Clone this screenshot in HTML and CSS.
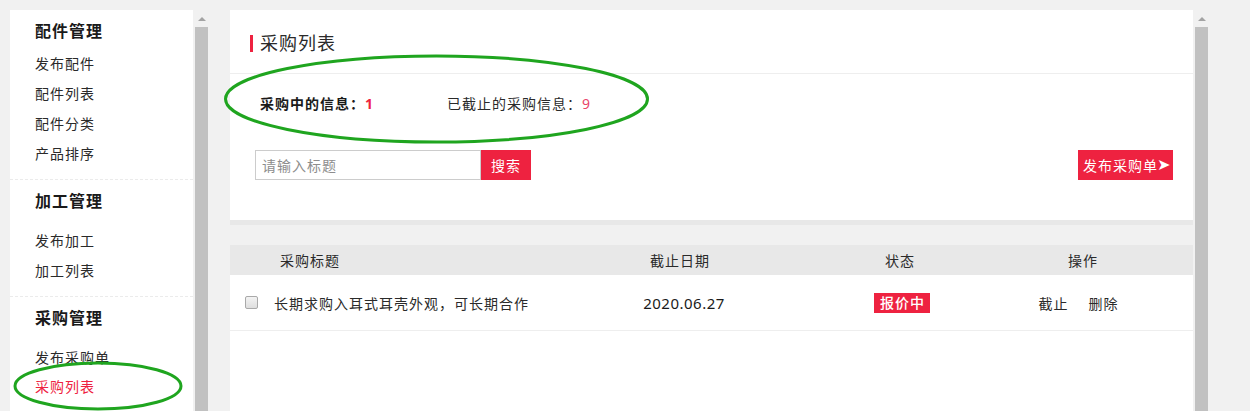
FILE: index.html
```html
<!DOCTYPE html>
<html lang="zh-CN">
<head>
<meta charset="utf-8">
<title>采购列表</title>
<link rel="stylesheet" href="styles.css">
</head>
<body>
<div class="page">
  <div class="frame side-frame">
    <nav class="sidebar">
      <div class="menu-group menu-group--first">
        <h3 class="menu-title">配件管理</h3>
        <ul class="menu-list">
          <li class="menu-item">发布配件</li>
          <li class="menu-item">配件列表</li>
          <li class="menu-item">配件分类</li>
          <li class="menu-item">产品排序</li>
        </ul>
      </div>
      <div class="menu-group">
        <h3 class="menu-title">加工管理</h3>
        <ul class="menu-list">
          <li class="menu-item">发布加工</li>
          <li class="menu-item">加工列表</li>
        </ul>
      </div>
      <div class="menu-group menu-group--last">
        <h3 class="menu-title">采购管理</h3>
        <ul class="menu-list">
          <li class="menu-item">发布采购单</li>
          <li class="menu-item menu-item--active">采购列表</li>
        </ul>
      </div>
    </nav>
    <div class="scrollbar"><div class="sb-arrow"><span class="sb-tri"></span></div><div class="sb-thumb"></div></div>
  </div>

  <div class="frame main-frame">
    <main class="content">
      <section class="panel">
        <div class="panel-head"><h2 class="panel-title">采购列表</h2></div>
        <div class="stats">
          <div class="stat stat--active"><span class="stat-label">采购中的信息：</span><span class="stat-num">1</span></div>
          <div class="stat stat--closed"><span class="stat-label">已截止的采购信息：</span><span class="stat-num">9</span></div>
        </div>
        <div class="toolbar">
          <div class="search">
            <input class="search-input" type="text" placeholder="请输入标题">
            <button class="btn search-btn">搜索</button>
          </div>
          <button class="btn publish-btn">发布采购单<span class="arrow">➤</span></button>
        </div>
      </section>

      <section class="list">
        <div class="list-row list-head">
          <div class="cell cell-title">采购标题</div>
          <div class="cell cell-center">截止日期</div>
          <div class="cell cell-center">状态</div>
          <div class="cell cell-center cell-ops">操作</div>
        </div>
        <div class="list-row list-item">
          <div class="cell cell-check"><input class="check" type="checkbox"><span class="item-title">长期求购入耳式耳壳外观，可长期合作</span></div>
          <div class="cell cell-center cell-date">2020.06.27</div>
          <div class="cell cell-center"><span class="badge">报价中</span></div>
          <div class="cell cell-center cell-ops cell-ops--body"><a class="op">截止</a><a class="op">删除</a></div>
        </div>
      </section>
    </main>
    <div class="scrollbar"><div class="sb-arrow"><span class="sb-tri"></span></div><div class="sb-thumb"></div></div>
  </div>
</div>

<svg class="annotations" width="1250" height="411" viewBox="0 0 1250 411">
  <ellipse cx="436.5" cy="99" rx="211" ry="43" fill="none" stroke="#1fa51f" stroke-width="3"/>
  <ellipse cx="98" cy="386" rx="83" ry="23" fill="none" stroke="#1fa51f" stroke-width="3"/>
</svg>
</body>
</html>
```

FILE: styles.css
```css
* { box-sizing: border-box; }

html, body {
  margin: 0;
  padding: 0;
  height: 411px;
  overflow: hidden;
}

body {
  background: #f1f1f1;
  font-family: "Noto Sans", "Noto Sans CJK SC", sans-serif;
  font-size: 14px;
  letter-spacing: 1px;
  color: #333;
  position: relative;
}

.page {
  display: flex;
  height: 411px;
  padding-top: 10px;
}

.frame {
  display: flex;
  gap: 2px;
}

.side-frame { margin-left: 10px; }
.main-frame { margin-left: 22px; }

/* scrollbars */
.scrollbar {
  width: 13px;
  display: flex;
  flex-direction: column;
}
.sb-arrow {
  height: 17px;
  display: flex;
  justify-content: center;
  align-items: center;
}
.sb-tri {
  width: 0;
  height: 0;
  border-left: 4px solid transparent;
  border-right: 4px solid transparent;
  border-bottom: 4px solid #a3a3a3;
}
.sb-thumb {
  flex: 1;
  background: #c1c1c1;
}

/* sidebar */
.sidebar {
  width: 183px;
  background: #fff;
}
.menu-group {
  padding: 6px 0 10px 25px;
  border-bottom: 1px dashed #ebebeb;
}
.menu-group--last { border-bottom: none; }
.menu-title {
  margin: 0;
  font-size: 16px;
  line-height: 30px;
  font-weight: bold;
  color: #1a1a1a;
}
.menu-list {
  list-style: none;
  margin: 10px 0 0;
  padding: 0;
}
.menu-group--first .menu-list { margin-top: 3px; }
.menu-item {
  line-height: 30px;
  color: #2a2a2a;
}
.menu-group--last .menu-item { line-height: 29px; }
.menu-item--active { color: #ee2240; }

/* main */
.content {
  width: 963px;
  display: flex;
  flex-direction: column;
  gap: 20px;
}

.panel {
  background: #fff;
  border-bottom: 5px solid #e8e8e8;
  padding-bottom: 40px;
}
.panel-head {
  padding: 18px 20px 15px;
  border-bottom: 1px solid #eeeeee;
}
.panel-title {
  margin: 0;
  font-size: 18px;
  font-weight: normal;
  line-height: 30px;
  color: #2a2a2a;
  display: flex;
  align-items: center;
  gap: 7px;
}
.panel-title::before {
  content: "";
  width: 3px;
  height: 17px;
  background: #ee2240;
}

.stats {
  display: flex;
  margin-top: 15px;
  padding-left: 30px;
  line-height: 30px;
  font-size: 14px;
}
.stat--active { width: 187px; }
.stat--active .stat-label { font-weight: bold; color: #1a1a1a; }
.stat--active .stat-num { color: #ee2240; font-weight: bold; }
.stat--closed .stat-label { color: #2a2a2a; }
.stat--closed .stat-num { color: #e8456a; }

.toolbar {
  margin-top: 31px;
  padding: 0 20px 0 25px;
  display: flex;
  justify-content: space-between;
  align-items: center;
}
.search { display: flex; }
.search-input {
  width: 226px;
  height: 30px;
  border: 1px solid #cccccc;
  padding: 0 6px;
  font-family: inherit;
  font-size: 14px;
  letter-spacing: 1px;
  color: #333;
  outline: none;
}
.search-input::placeholder { color: #8d8d8d; }
.btn {
  height: 30px;
  border: none;
  background: #ee2240;
  color: #fff;
  font-family: inherit;
  font-size: 14px;
  letter-spacing: 1px;
  padding: 0;
  cursor: pointer;
}
.search-btn { width: 50px; }
.publish-btn {
  width: 95px;
  text-align: left;
  padding-left: 5px;
  display: flex;
  align-items: center;
}
.publish-btn .arrow {
  font-family: "DejaVu Sans", sans-serif;
  font-size: 16px;
  line-height: 1;
  letter-spacing: 0;
  margin-left: -1px;
}

/* list */
.list {
  background: #fff;
  flex: 1;
}
.list-row {
  display: grid;
  grid-template-columns: 303px 294px 146px 220px;
  align-items: center;
}
.list-head {
  height: 30px;
  background: #e8e8e8;
  color: #2a2a2a;
}
.list-item {
  height: 56px;
  border-bottom: 1px solid #eeeeee;
}
.cell-title { padding-left: 50px; }
.cell-center { text-align: center; }
.cell-check {
  display: flex;
  align-items: center;
  padding-left: 15px;
  gap: 16px;
  white-space: nowrap;
}
.check {
  appearance: none;
  -webkit-appearance: none;
  margin: 0;
  width: 13px;
  height: 13px;
  border: 1px solid #a9a9a9;
  border-radius: 2px;
  background: linear-gradient(#f3f3f3, #dedede);
}
.item-title { color: #2a2a2a; }
.cell-date { padding-left: 8px; color: #1a1a1a; font-size: 15px; letter-spacing: 0.5px; }
.badge {
  display: inline-block;
  background: #ee2240;
  color: #fff;
  line-height: 20px;
  padding: 0 5px 0 6px;
  font-weight: 500;
  margin-left: 4px;
}
.cell-ops--body {
  display: flex;
  justify-content: center;
  gap: 20px;
  padding-right: 9px;
}
.op { color: #2a2a2a; }

.annotations {
  position: absolute;
  left: 0;
  top: 0;
  pointer-events: none;
}
```
